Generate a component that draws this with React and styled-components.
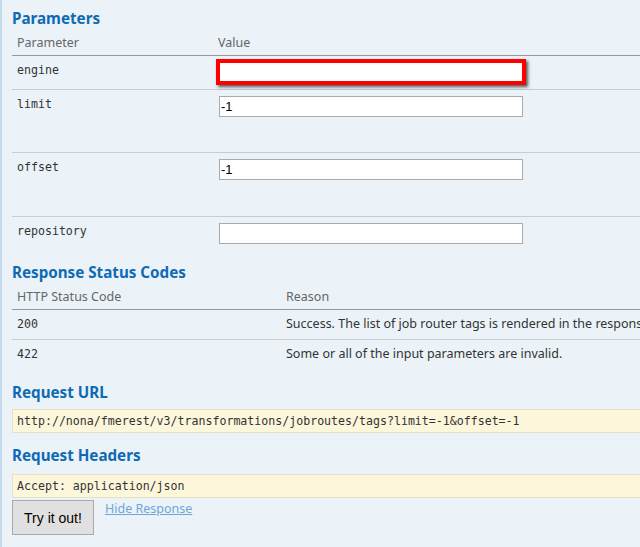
import React from 'react';
import styled, { createGlobalStyle } from 'styled-components';

const Global = createGlobalStyle`
  html, body {
    margin: 0;
    padding: 0;
    background: #ebf3f9;
    overflow: hidden;
  }
`;

const Content = styled.div`
  width: 780px;
  height: 547px;
  box-sizing: border-box;
  background: #ebf3f9;
  border-left: 2px solid #c3d9ec;
  padding: 8px 0 0 10px;
  font-family: "Noto Sans", "Open Sans", sans-serif;
  font-size: 12.5px;
  color: #333;
`;

const Heading = styled.h4`
  margin: ${p => (p.$first ? '0' : p.$gap || '13px')} 0 2px;
  color: #0f6ab4;
  font-size: 15.2px;
  font-weight: bold;
  line-height: 20px;
`;

const Table = styled.div`
  display: flex;
  flex-direction: column;
`;

const HeadRow = styled.div`
  display: grid;
  grid-template-columns: ${p => p.$cols};
  height: ${p => p.$h}px;
  box-sizing: border-box;
  border-bottom: 1px solid #999;
  align-items: center;
  color: #666;
`;

const Row = styled.div`
  display: grid;
  grid-template-columns: ${p => p.$cols};
  height: ${p => p.$h}px;
  box-sizing: border-box;
  border-bottom: ${p => (p.$last ? 'none' : '1px solid #ccc')};
  align-items: start;
`;

const Cell = styled.div`
  padding: 5px 5px 0;
  line-height: 18px;
  white-space: nowrap;
  overflow: hidden;
`;

const HeadCell = styled.div`
  padding: 0 5px;
  white-space: nowrap;
`;

const Mono = styled.span`
  font-family: "DejaVu Sans Mono", "Liberation Mono", monospace;
  font-size: 11.6px;
  color: #333;
`;

const ValueCell = styled.div`
  padding: 6px 0 0 6px;
`;

const TextInput = styled.input`
  display: block;
  box-sizing: border-box;
  width: ${p => (p.$highlight ? 310 : 304)}px;
  height: ${p => (p.$highlight ? 26 : 21)}px;
  margin: ${p => (p.$highlight ? '-3px 0 0 -3px' : '0')};
  border: ${p => (p.$highlight ? '4px solid #ff0000' : '1px solid #aaa')};
  box-shadow: ${p => (p.$highlight ? '2px 2px 3px rgba(0,0,0,0.65)' : 'none')};
  background: #fff;
  padding: 0 1px;
  font-family: "Liberation Sans", Arial, sans-serif;
  font-size: 13px;
  color: #000;
  outline: none;
`;

const CodeBlock = styled.pre`
  margin: ${p => p.$mt || 7}px 0 0;
  height: 24px;
  box-sizing: border-box;
  background: #fcf6db;
  border: 1px solid #e5e0c6;
  border-right: none;
  padding: 0 4px;
  font-family: "DejaVu Sans Mono", "Liberation Mono", monospace;
  font-size: 11.6px;
  line-height: 22px;
  color: #333;
  white-space: nowrap;
`;

const Actions = styled.div`
  display: flex;
  align-items: flex-start;
  gap: 11px;
  margin-top: 2px;
`;

const Button = styled.button`
  width: 82px;
  height: 35px;
  background: #e0e0e0;
  border: 1px solid #aaa;
  border-radius: 0;
  font-family: "Liberation Sans", Arial, sans-serif;
  font-size: 14px;
  color: #000;
  padding: 0;
`;

const Link = styled.a`
  color: #72a4d8;
  text-decoration: underline;
  font-size: 12.5px;
  line-height: 18px;
  cursor: pointer;
`;

const params = [
  { name: 'engine', value: '', h: 34, highlight: true },
  { name: 'limit', value: '-1', h: 63 },
  { name: 'offset', value: '-1', h: 64 },
  { name: 'repository', value: '', h: 32, last: true },
];

const codes = [
  { code: '200', reason: 'Success. The list of job router tags is rendered in the response body.' },
  { code: '422', reason: 'Some or all of the input parameters are invalid.', last: true },
];

const PCOLS = '201px 1fr';
const SCOLS = '269px 1fr';

export default function App() {
  return (
    <>
      <Global />
      <Content>
        <Heading $first>Parameters</Heading>
        <Table>
          <HeadRow $cols={PCOLS} $h={26}>
            <HeadCell>Parameter</HeadCell>
            <HeadCell>Value</HeadCell>
          </HeadRow>
          {params.map(p => (
            <Row key={p.name} $cols={PCOLS} $h={p.h} $last={p.last}>
              <Cell><Mono>{p.name}</Mono></Cell>
              <ValueCell>
                <TextInput type="text" defaultValue={p.value} $highlight={p.highlight} />
              </ValueCell>
            </Row>
          ))}
        </Table>

        <Heading>Response Status Codes</Heading>
        <Table>
          <HeadRow $cols={SCOLS} $h={26}>
            <HeadCell>HTTP Status Code</HeadCell>
            <HeadCell>Reason</HeadCell>
          </HeadRow>
          {codes.map(c => (
            <Row key={c.code} $cols={SCOLS} $h={30} $last={c.last}>
              <Cell><Mono>{c.code}</Mono></Cell>
              <Cell>{c.reason}</Cell>
            </Row>
          ))}
        </Table>

        <Heading $gap="12px">Request URL</Heading>
        <CodeBlock>http://nona/fmerest/v3/transformations/jobroutes/tags?limit=-1&amp;offset=-1</CodeBlock>

        <Heading $gap="12px">Request Headers</Heading>
        <CodeBlock $mt={9}>Accept: application/json</CodeBlock>

        <Actions>
          <Button>Try it out!</Button>
          <Link>Hide Response</Link>
        </Actions>
      </Content>
    </>
  );
}
